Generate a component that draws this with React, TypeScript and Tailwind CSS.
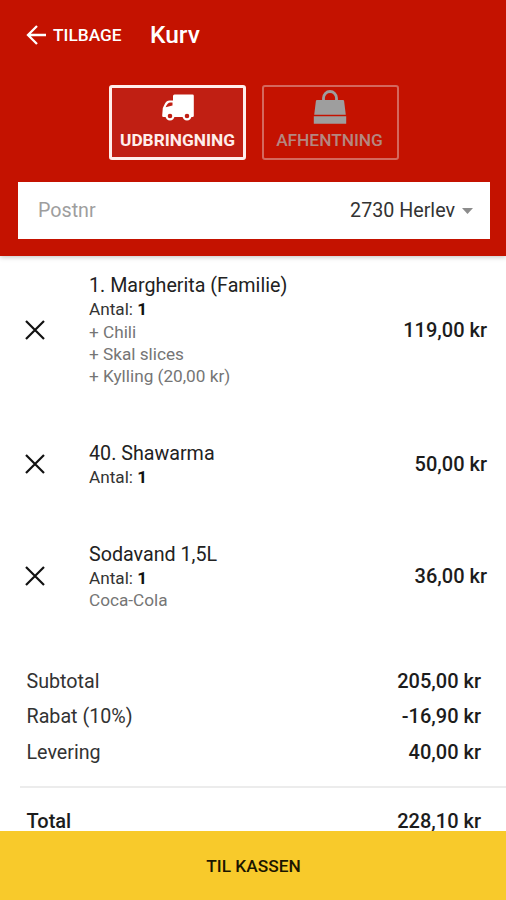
import React from 'react';

const items = [
    {
        name: "1. Margherita (Familie)",
        extras: ["+ Chili", "+ Skal slices", "+ Kylling (20,00 kr)"],
        price: "119,00 kr",
    },
    { name: "40. Shawarma", extras: [], price: "50,00 kr" },
    { name: "Sodavand 1,5L", extras: ["Coca-Cola"], price: "36,00 kr" },
];

const summary = [
    { label: "Subtotal", value: "205,00 kr" },
    { label: "Rabat (10%)", value: "-16,90 kr" },
    { label: "Levering", value: "40,00 kr" },
];

const TruckIcon = () => (
    <svg width="32" height="28" viewBox="0 0 32 28" fill="none">
        <path
            fill="#fff"
            fillRule="evenodd"
            d="M12.500.500h18q1.300 0 1.300 1.300v20q0 1.200-1.300 1.200H1.500Q0 23 .200 21.500L.800 14 3 9.500Q4.500 6.500 7.500 6.500H11V2Q11 .500 12.500.500ZM3.600 13.300 10.500 11.500V8.500H8.300Q5.500 8.700 3.600 13.300Z"
        />
        <circle cx="8" cy="22" r="3.400" fill="#c01f13" stroke="#fff" strokeWidth="2.200" />
        <circle cx="25" cy="22" r="3.400" fill="#c01f13" stroke="#fff" strokeWidth="2.200" />
    </svg>
);

const BagIcon = () => (
    <svg width="34" height="36" viewBox="0 0 34 36" fill="none">
        <path d="M10.500 12.500V8a6.500 6.500 0 0 1 13 0v4.500" stroke="#9e9e9e" strokeWidth="2.800" />
        <path d="M4 10h26q1 0 1.100 1l1.700 13.800H1.200L2.900 11Q3 10 4 10ZM.8 26.300h32.400v7.400H.8Z" fill="#9e9e9e" />
    </svg>
);

const CloseIcon = () => (
    <svg width="20" height="20" viewBox="0 0 20 20" fill="none" stroke="#111" strokeWidth="2.200">
        <path d="M1 1l18 18M19 1L1 19" />
    </svg>
);

const Header = () => {
    return (
        <div className="h-[256px] bg-[#c41200] shadow-[0_1px_5px_rgba(0,0,0,0.25)]">
            <div className="flex h-[70px] items-center pl-[26px] text-white">
                <svg width="20" height="20" viewBox="0 0 20 20" fill="none" stroke="#fff" strokeWidth="2.300">
                    <path d="M20 10H2M11 1L2 10l9 9" />
                </svg>
                <span className="ml-[7px] w-[97px] pt-[2px] text-[17.300px] font-medium">TILBAGE</span>
                <span className="pt-px text-[24.500px] font-medium">Kurv</span>
            </div>

            <div className="flex justify-center gap-[16px] pt-[15px] pl-[2px]">
                <div className="flex h-[75px] w-[137px] flex-col items-center rounded-[3px] border-[3px] border-[#ffeeeb] bg-[#c01f13] pt-[6px]">
                    <TruckIcon />
                    <span className="mt-[6px] text-[17.300px] leading-[24px] font-bold text-[#ffeeeb]">UDBRINGNING</span>
                </div>
                <div className="flex h-[75px] w-[137px] flex-col items-center rounded-[3px] border-2 border-[#d4685d] pt-[3px] pr-[2px]">
                    <BagIcon />
                    <span className="mt-[2px] text-[17.300px] leading-[24px] font-medium text-[#b58780]">AFHENTNING</span>
                </div>
            </div>

            <div className="mr-[16px] ml-[18px] mt-[22px] flex h-[57px] items-center bg-white pr-[17px] pl-[20px] text-[19.700px]">
                <span className="flex-1 text-[#9e9e9e]">Postnr</span>
                <span className="text-[#333]">2730 Herlev</span>
                <svg className="ml-[7px]" width="11" height="6" viewBox="0 0 11 6">
                    <path d="M0 0h11L5.500 6Z" fill="#8c8c8c" />
                </svg>
            </div>
        </div>
    );
};

const App = () => {
    return (
        <div className="flex h-[900px] w-[506px] flex-col overflow-hidden bg-white font-['Roboto',sans-serif] text-[#1c1c1c]">
            <Header />

            <div className="flex flex-1 flex-col">
                <div className="flex flex-col gap-[52.500px] pt-[16.500px]">
                    {items.map((item) => (
                        <div key={item.name} className="flex items-center pr-[19px] pl-[25px]">
                            <CloseIcon />
                            <div className="ml-[44px] flex-1 text-[17.200px] leading-[22.300px] text-[#757575]">
                                <div className="pt-px text-[19.700px] leading-[25px] text-[#222]">{item.name}</div>
                                <div className="text-[#333]">
                                    Antal: <span className="font-bold text-[#111]">1</span>
                                </div>
                                {item.extras.map((extra) => (
                                    <div key={extra}>{extra}</div>
                                ))}
                            </div>
                            <span className="text-[20px] font-medium">{item.price}</span>
                        </div>
                    ))}
                </div>

                <div className="mt-[52.200px] pr-[25px] pl-[26.500px] text-[19.700px] leading-[35.700px]">
                    {summary.map((row) => (
                        <div key={row.label} className="flex justify-between">
                            <span className="text-[#333]">{row.label}</span>
                            <span className="text-[20px] font-medium">{row.value}</span>
                        </div>
                    ))}
                </div>

                <div className="mt-[15.300px] ml-[20px] shrink-0 border-t-2 border-[#ececec]" />
                <div className="mt-[21px] flex h-[22px] shrink-0 justify-between pr-[25px] pl-[26.500px] text-[20px] leading-[24px] font-medium">
                    <span>Total</span>
                    <span>228,10 kr</span>
                </div>
            </div>

            <div className="flex h-[69px] shrink-0 items-center justify-center bg-[#f8ca2b] pt-[3px] pl-px text-[17.300px] font-medium text-[#1c1600]">
                TIL KASSEN
            </div>
        </div>
    );
};

export default App;
